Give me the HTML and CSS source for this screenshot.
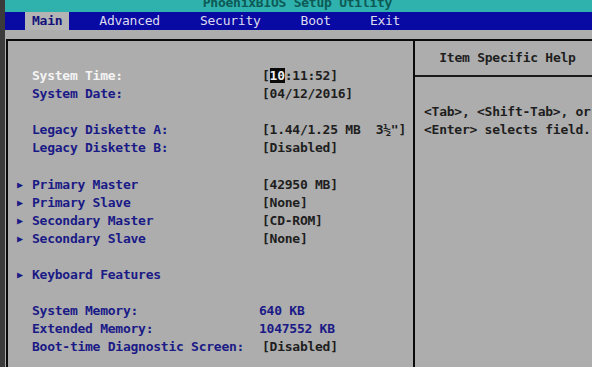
FILE: index.html
```html
<!DOCTYPE html>
<html lang="en">

  <head>
    <meta charset="UTF-8">
    <meta name="viewport" content="width=device-width, initial-scale=1.0">
    <title>PhoenixBIOS Setup Utility</title>
    <link rel="stylesheet" href="styles.css">
  </head>

  <body>
    <div class="edge"></div>
    <div class="screen">
      <div class="titlebar"><span>PhoenixBIOS Setup Utility</span></div>
      <div class="menubar">
        <span class="tab active">Main</span>
        <span class="tab">Advanced</span>
        <span class="tab">Security</span>
        <span class="tab">Boot</span>
        <span class="tab">Exit</span>
      </div>
      <div class="spacer"></div>

      <div class="panel">
        <div class="items">
          <div class="row"><span class="arrow"></span><span class="label selected">System Time:</span><span class="value">[<b class="cursor">10</b>:11:52]</span></div>
          <div class="row"><span class="arrow"></span><span class="label">System Date:</span><span class="value">[04/12/2016]</span></div>
          <div class="row blank"></div>
          <div class="row"><span class="arrow"></span><span class="label">Legacy Diskette A:</span><span class="value">[1.44/1.25 MB  3½"]</span></div>
          <div class="row"><span class="arrow"></span><span class="label">Legacy Diskette B:</span><span class="value">[Disabled]</span></div>
          <div class="row blank"></div>
          <div class="row"><span class="arrow">▶</span><span class="label">Primary Master</span><span class="value">[42950 MB]</span></div>
          <div class="row"><span class="arrow">▶</span><span class="label">Primary Slave</span><span class="value">[None]</span></div>
          <div class="row"><span class="arrow">▶</span><span class="label">Secondary Master</span><span class="value">[CD-ROM]</span></div>
          <div class="row"><span class="arrow">▶</span><span class="label">Secondary Slave</span><span class="value">[None]</span></div>
          <div class="row blank"></div>
          <div class="row"><span class="arrow">▶</span><span class="label">Keyboard Features</span></div>
          <div class="row blank"></div>
          <div class="row"><span class="arrow"></span><span class="label">System Memory:</span><span class="value info">640 KB</span></div>
          <div class="row"><span class="arrow"></span><span class="label">Extended Memory:</span><span class="value info">1047552 KB</span></div>
          <div class="row"><span class="arrow"></span><span class="label">Boot-time Diagnostic Screen:</span><span class="value">[Disabled]</span></div>
        </div>

        <div class="help">
          <div class="help-title">Item Specific Help</div>
          <div class="help-text">
            <div>&lt;Tab&gt;, &lt;Shift-Tab&gt;, or</div>
            <div>&lt;Enter&gt; selects field.</div>
          </div>
        </div>
      </div>
    </div>
  </body>

</html>
```

FILE: styles.css
```css
body {
  margin: 0;
  height: 367px;
  overflow: hidden;
  display: flex;
  background-color: #adadad;
  font-family: "DejaVu Sans Mono", "Liberation Mono", monospace;
  font-size: 13px;
  letter-spacing: -0.25px;
  font-weight: bold;
  color: #1e1e1e;
}

.edge {
  width: 5px;
  background-color: #3b3b3b;
}

.screen {
  flex: 1;
  display: flex;
  flex-direction: column;
}

.titlebar {
  height: 12px;
  overflow: hidden;
  background-color: #2fb1ae;
  text-align: center;
  color: #0d5a55;
}

.titlebar span {
  display: block;
  margin-top: -5px;
  line-height: 16px;
  padding-right: 2px;
}

.menubar {
  height: 18px;
  display: flex;
  align-items: center;
  background-color: #0909a3;
  padding-left: 20px;
}

.tab {
  height: 18px;
  line-height: 18px;
  padding: 0 7px;
  color: #dcdcf0;
  font-weight: normal;
}

.tab:nth-child(2) { margin-left: 23px; }
.tab:nth-child(3) { margin-left: 26px; }
.tab:nth-child(4) { margin-left: 26px; }
.tab:nth-child(5) { margin-left: 25px; }

.tab.active {
  background-color: #b4b4b4;
  color: #12127a;
  font-weight: bold;
}

.spacer {
  height: 9px;
}

.panel {
  flex: 1;
  display: grid;
  grid-template-columns: 405px 1fr;
  border-top: 2px solid #0a0a0a;
  border-left: 2px solid #0a0a0a;
  margin-left: 1px;
}

.items {
  padding: 26px 0 0 9px;
}

.row {
  display: flex;
  height: 18.1px;
  line-height: 18px;
  white-space: pre;
}

.arrow {
  width: 15px;
  font-size: 10px;
  color: #1a1a86;
}

.label {
  width: 230px;
  color: #1a1a86;
}

.label.selected {
  color: #f4f4f4;
}

.value {
  color: #1e1e1e;
}

.value.info {
  color: #1a1a86;
  margin-left: -3px;
}

.cursor {
  background-color: #0a0a0a;
  color: #f0f0f0;
}

.help {
  border-left: 2px solid #0a0a0a;
  white-space: nowrap;
  overflow: hidden;
}

.help-title {
  height: 34px;
  line-height: 34px;
  text-align: center;
  border-bottom: 2px solid #1a1a1a;
  padding-left: 8px;
}

.help-text {
  padding: 26px 0 0 9px;
  line-height: 18px;
}
```
